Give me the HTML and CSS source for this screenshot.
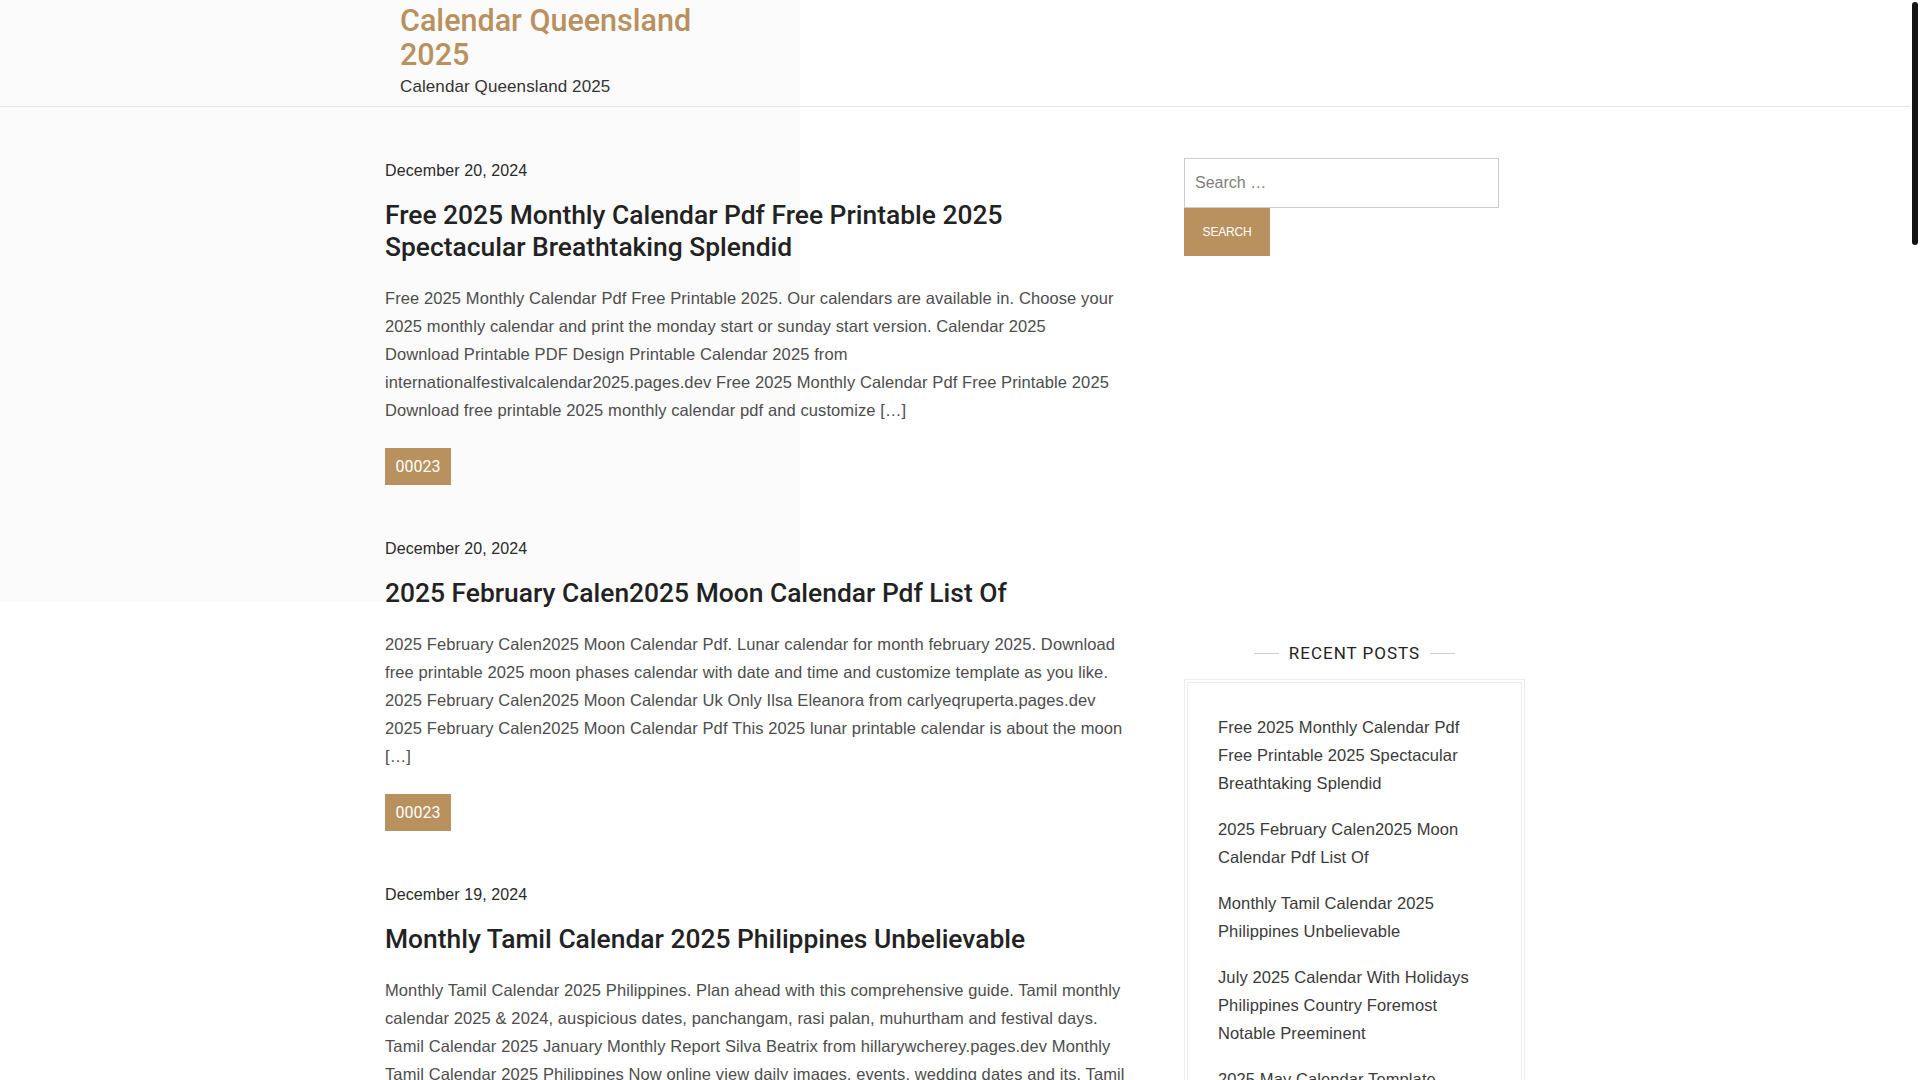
FILE: index.html
```html
<!DOCTYPE html>
<html lang="en">
<head>
<meta charset="utf-8">
<title>Calendar Queensland 2025</title>
<link rel="stylesheet" href="styles.css">
</head>
<body>
<header class="site-header">
  <div class="header-inner">
    <div class="branding">
      <p class="site-title"><a href="#">Calendar Queensland 2025</a></p>
      <p class="site-desc">Calendar Queensland 2025</p>
    </div>
  </div>
</header>

<div class="site-content">
  <main class="posts">
    <article class="post">
      <div class="post-date">December 20, 2024</div>
      <h2 class="post-title"><a href="#">Free 2025 Monthly Calendar Pdf Free Printable 2025 Spectacular Breathtaking Splendid</a></h2>
      <p class="post-excerpt">Free 2025 Monthly Calendar Pdf Free Printable 2025. Our calendars are available in. Choose your<br>2025 monthly calendar and print the monday start or sunday start version. Calendar 2025<br>Download Printable PDF Design Printable Calendar 2025 from<br>internationalfestivalcalendar2025.pages.dev Free 2025 Monthly Calendar Pdf Free Printable 2025<br>Download free printable 2025 monthly calendar pdf and customize […]</p>
      <a class="post-tag" href="#">00023</a>
    </article>

    <article class="post">
      <div class="post-date">December 20, 2024</div>
      <h2 class="post-title"><a href="#">2025 February Calen2025 Moon Calendar Pdf List Of</a></h2>
      <p class="post-excerpt">2025 February Calen2025 Moon Calendar Pdf. Lunar calendar for month february 2025. Download<br>free printable 2025 moon phases calendar with date and time and customize template as you like.<br>2025 February Calen2025 Moon Calendar Uk Only Ilsa Eleanora from carlyeqruperta.pages.dev<br>2025 February Calen2025 Moon Calendar Pdf This 2025 lunar printable calendar is about the moon<br>[…]</p>
      <a class="post-tag" href="#">00023</a>
    </article>

    <article class="post">
      <div class="post-date">December 19, 2024</div>
      <h2 class="post-title"><a href="#">Monthly Tamil Calendar 2025 Philippines Unbelievable</a></h2>
      <p class="post-excerpt">Monthly Tamil Calendar 2025 Philippines. Plan ahead with this comprehensive guide. Tamil monthly<br>calendar 2025 &amp; 2024, auspicious dates, panchangam, rasi palan, muhurtham and festival days.<br>Tamil Calendar 2025 January Monthly Report Silva Beatrix from hillarywcherey.pages.dev Monthly<br>Tamil Calendar 2025 Philippines Now online view daily images, events, wedding dates and its. Tamil<br>[…]</p>
      <a class="post-tag" href="#">00023</a>
    </article>

    <article class="post">
      <div class="post-date">December 19, 2024</div>
      <h2 class="post-title"><a href="#">July 2025 Calendar With Holidays Philippines Country Foremost Notable Preeminent</a></h2>
      <p class="post-excerpt">July 2025 Calendar With Holidays Philippines. Check the list of regular holidays and special non-working days for the month of july 2025. Printable calendar with philippine holidays July 2025 Calendar With Holidays Philippines from calendarholidays2025.pages.dev July 2025 Calendar With Holidays Philippines Plan your month ahead with this free printable template […]</p>
      <a class="post-tag" href="#">00023</a>
    </article>

    <article class="post">
      <div class="post-date">December 18, 2024</div>
      <h2 class="post-title"><a href="#">2025 May Calendar Template Printable Free Download Remarkable</a></h2>
      <p class="post-excerpt">2025 May Calendar Template. Download a free printable may 2025 calendar template in pdf, word and excel formats. Choose from portrait or landscape layouts with room for notes and reminders. 2025 May Calendar Template from maycalendartemplate2025.pages.dev 2025 May Calendar Template Customize the design and print as many copies as you need for your home or office […]</p>
      <a class="post-tag" href="#">00023</a>
    </article>

    <nav class="pagination">
      <a class="page current" href="#">1</a>
      <a class="page" href="#">2</a>
      <a class="page" href="#">3</a>
      <a class="page" href="#">Next</a>
    </nav>
  </main>

  <aside class="sidebar">
    <form class="search-form" action="#">
      <input class="search-field" type="search" placeholder="Search …">
      <button class="search-submit" type="button">Search</button>
    </form>

    <section class="widget recent-posts">
      <h3 class="widget-title"><span>Recent Posts</span></h3>
      <div class="widget-box">
        <ul class="recent-list">
          <li><a href="#">Free 2025 Monthly Calendar Pdf Free Printable 2025 Spectacular Breathtaking Splendid</a></li>
          <li><a href="#">2025 February Calen2025 Moon Calendar Pdf List Of</a></li>
          <li><a href="#">Monthly Tamil Calendar 2025 Philippines Unbelievable</a></li>
          <li><a href="#">July 2025 Calendar With Holidays Philippines Country Foremost Notable Preeminent</a></li>
          <li><a href="#">2025 May Calendar Template Printable Free Download Remarkable</a></li>
        </ul>
      </div>
    </section>
  </aside>
</div>

<footer class="site-footer">
  <p>Copyright © 2025 Calendar Queensland 2025</p>
</footer>

<div class="scrollbar" aria-hidden="true"><div class="scrollbar-thumb"></div></div>
</body>
</html>
```

FILE: styles.css
```css
html {
  background: #fff;
}

body {
  margin: 0 10px 0 0;
  font-family: "Liberation Sans", Arial, sans-serif;
  font-size: 16.5px;
  letter-spacing: 0.1px;
  color: #4d4d4d;
  background-color: #fff;
  background-image: linear-gradient(#fbfbfb, #fbfbfb);
  background-repeat: no-repeat;
  background-size: 800px 602px;
  background-position: 0 0;
}

a {
  text-decoration: none;
  color: inherit;
}

/* Scrollbar drawn over the page edge */
.scrollbar {
  position: fixed;
  top: 0;
  right: 0;
  width: 10px;
  height: 100vh;
  background: #fff;
}

.scrollbar-thumb {
  position: absolute;
  top: 2px;
  left: 2px;
  width: 6px;
  height: 243px;
  border-radius: 3px;
  background: #141414;
}

/* Header */
.site-header {
  border-bottom: 1px solid #e6e6e6;
}

.header-inner {
  width: 1140px;
  margin: 0 auto;
  padding: 4px 15px 7px;
  box-sizing: border-box;
}

.branding {
  width: 340px;
}

.site-title {
  margin: 0;
  font-family: Roboto, "Liberation Sans", sans-serif;
  font-weight: 500;
  font-size: 30.5px;
  line-height: 34px;
  letter-spacing: 0;
  color: #b8915f;
}

.site-desc {
  margin: 3px 0 0;
  font-size: 17px;
  line-height: 24px;
  color: #333;
}

/* Layout */
.site-content {
  width: 1140px;
  margin: 0 auto;
  display: flex;
  gap: 39px;
}

.posts {
  width: 760px;
  flex: none;
  padding-top: 52px;
}

.sidebar {
  width: 341px;
  flex: none;
  padding-top: 51px;
}

/* Posts */
.post {
  margin-bottom: 52px;
}

.post-date {
  font-size: 16px;
  line-height: 24px;
  color: #2a2a2a;
}

.post-title {
  margin: 16px 0 0;
  max-width: 752px;
  font-family: Roboto, "Liberation Sans", sans-serif;
  font-weight: 500;
  font-size: 26.4px;
  line-height: 32px;
  letter-spacing: 0;
  color: #222;
}

.post-excerpt {
  margin: 21px 0 0;
  line-height: 28px;
  color: #4d4d4d;
}

.post-tag {
  display: inline-block;
  margin-top: 24px;
  padding: 8px 10.5px;
  font-family: Roboto, "Liberation Sans", sans-serif;
  font-size: 16px;
  line-height: 21px;
  letter-spacing: 0;
  color: #fff;
  background: #b8915f;
}

.pagination {
  display: flex;
  gap: 8px;
  margin-bottom: 60px;
}

.page {
  padding: 8px 14px;
  border: 1px solid #e6e6e6;
  color: #333;
}

.page.current {
  background: #b8915f;
  border-color: #b8915f;
  color: #fff;
}

/* Sidebar */
.search-form {
  display: flex;
  flex-direction: column;
  align-items: flex-start;
}

.search-field {
  width: 315px;
  height: 50px;
  box-sizing: border-box;
  margin: 0;
  padding: 0 10px;
  border: 1px solid #cccccc;
  border-radius: 0;
  font-family: "Liberation Sans", Arial, sans-serif;
  font-size: 16px;
  color: #333;
  background: #fff;
  outline: none;
}

.search-field::placeholder {
  color: #808080;
}

.search-submit {
  width: 86px;
  height: 48px;
  margin: 0;
  padding: 0;
  border: 0;
  font-family: "Liberation Sans", Arial, sans-serif;
  font-size: 12px;
  letter-spacing: -0.2px;
  text-transform: uppercase;
  color: #fff;
  background: #b8915f;
}

.widget-title {
  display: flex;
  align-items: center;
  justify-content: center;
  gap: 10px;
  margin: 383px 0 12px;
  font-family: Roboto, "Liberation Sans", sans-serif;
  font-weight: 400;
  font-size: 17px;
  line-height: 28px;
  letter-spacing: 1px;
  text-transform: uppercase;
  color: #222;
}

.widget-title::before,
.widget-title::after {
  content: "";
  width: 25px;
  height: 1px;
  background: #d0d0d0;
}

.widget-box {
  border: 1px solid #ededed;
  padding: 2px;
}

.recent-list {
  list-style: none;
  margin: 0;
  padding: 30px;
  border: 1px solid #ededed;
}

.recent-list li {
  line-height: 28px;
  color: #3a3a3a;
  margin-bottom: 18px;
}

.site-footer {
  margin-top: 40px;
  padding: 30px 0;
  border-top: 1px solid #e6e6e6;
  text-align: center;
  font-size: 14px;
  color: #666;
}

.site-footer p {
  margin: 0;
}
```
